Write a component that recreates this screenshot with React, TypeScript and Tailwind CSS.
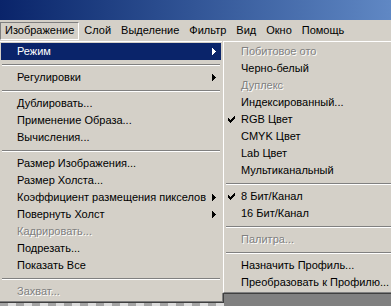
import clsx from "clsx";

type Entry =
  | "sep"
  | { label: string; sub?: boolean; active?: boolean; disabled?: boolean; checked?: boolean };

const mainMenu: Entry[] = [
  { label: "Режим", sub: true, active: true },
  "sep",
  { label: "Регулировки", sub: true },
  "sep",
  { label: "Дублировать..." },
  { label: "Применение Образа..." },
  { label: "Вычисления..." },
  "sep",
  { label: "Размер Изображения..." },
  { label: "Размер Холста..." },
  { label: "Коэффициент размещения пикселов", sub: true },
  { label: "Повернуть Холст", sub: true },
  { label: "Кадрировать...", disabled: true },
  { label: "Подрезать..." },
  { label: "Показать Все" },
  "sep",
  { label: "Захват...", disabled: true },
];

const modeMenu: Entry[] = [
  { label: "Побитовое ото", disabled: true },
  { label: "Черно-белый" },
  { label: "Дуплекс", disabled: true },
  { label: "Индексированный..." },
  { label: "RGB Цвет", checked: true },
  { label: "CMYK Цвет" },
  { label: "Lab Цвет" },
  { label: "Мультиканальный" },
  "sep",
  { label: "8 Бит/Канал", checked: true },
  { label: "16 Бит/Канал" },
  "sep",
  { label: "Палитра...", disabled: true },
  "sep",
  { label: "Назначить Профиль..." },
  { label: "Преобразовать к Профилю..." },
];

const menuBar = ["Изображение", "Слой", "Выделение", "Фильтр", "Вид", "Окно", "Помощь"];

// classic 7x7 check glyph, one string per pixel row
const checkRows = ["......#", ".....##", "#...###", "##.###.", "#####..", ".###...", "..#...."];

const Check = () => (
  <svg width="7" height="7" viewBox="0 0 7 7" shapeRendering="crispEdges" className="block">
    {checkRows.flatMap((row, y) =>
      row.split("").map((c, x) => (c === "#" ? <rect key={`${x}-${y}`} x={x} y={y} width="1" height="1" fill="#000" /> : null)),
    )}
  </svg>
);

const Arrow = ({ white }: { white?: boolean }) => (
  <svg width="4" height="7" viewBox="0 0 4 7" shapeRendering="crispEdges" className="block">
    <path d="M0 0h1v1h1v1h1v1h1v1h-1v1h-1v1h-1v1h-1z" fill={white ? "#fff" : "#000"} />
  </svg>
);

const Menu = ({ items, className }: { items: Entry[]; className: string }) => (
  <div
    className={clsx(
      "absolute top-[40px] border border-t-[#d4d0c8] border-l-[#d4d0c8] border-r-[#404040] border-b-[#404040] bg-[#d4d0c8]",
      className,
    )}
  >
    <div className="border border-t-white border-l-white border-r-[#808080] border-b-[#808080] p-px">
      {items.map((item, i) =>
        item === "sep" ? (
          <div key={i} className="flex h-[9px] flex-col justify-center px-px">
            <div className="h-px bg-[#808080]" />
            <div className="h-px bg-white" />
          </div>
        ) : (
          <div
            key={i}
            className={clsx(
              "relative flex h-[17px] items-center whitespace-nowrap pl-[16px] pr-[5px]",
              item.active && "bg-[#0a246a] text-white",
              item.disabled && "text-[#808080] [text-shadow:1px_1px_0_#ffffff]",
            )}
          >
            {item.checked && (
              <span className="absolute left-[3px] top-[5px]">
                <Check />
              </span>
            )}
            <span className="flex-1">{item.label}</span>
            {item.sub && <Arrow white={item.active} />}
          </div>
        ),
      )}
    </div>
  </div>
);

export default function App() {
  return (
    <div className="relative flex h-[306px] w-[391px] flex-col overflow-hidden bg-[#808080] text-[11px] leading-none text-black [font-family:'Liberation_Sans',Arial,sans-serif]">
      <div className="h-[20px] shrink-0 bg-gradient-to-r from-[#0a246a] to-[#6088c4]" />
      <div className="flex h-[20px] shrink-0 items-center bg-[#d4d0c8] pt-px">
        {menuBar.map((m, i) => (
          <div
            key={m}
            className={clsx(
              "flex h-[18px] items-center px-[5px]",
              i === 0 && "border border-t-[#808080] border-l-[#808080] border-r-white border-b-white pl-[4px] pr-[4px]",
            )}
          >
            {m}
          </div>
        ))}
      </div>
      <div className="flex flex-1 flex-col justify-end">
        <div className="h-[4px] w-[224px] bg-[repeating-linear-gradient(90deg,#a4a4a4_0_8px,#dcdcdc_8px_16px)]" />
      </div>

      <Menu items={mainMenu} className="left-[-2px] w-[226px]" />
      <Menu items={modeMenu} className="left-[222px] w-[190px]" />
    </div>
  );
}
